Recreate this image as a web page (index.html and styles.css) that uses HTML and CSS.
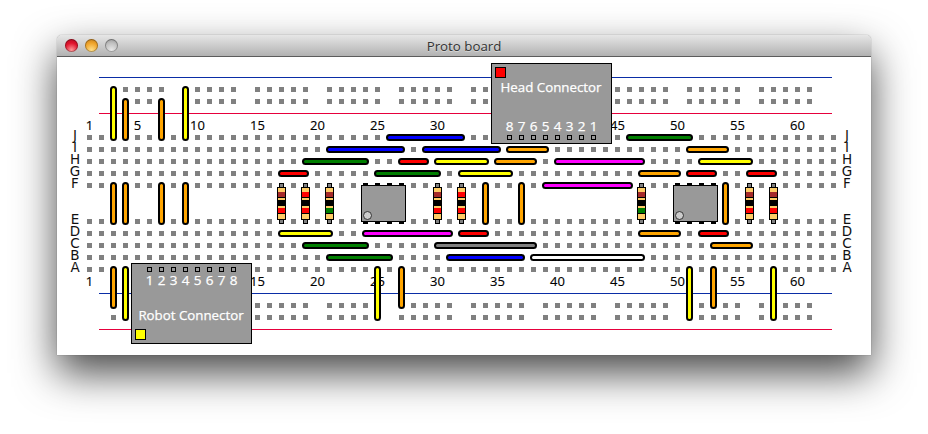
FILE: index.html
```html
<!DOCTYPE html>
<html lang="en">
<head>
  <meta charset="UTF-8" />
  <title>Proto board</title>
  <link rel="stylesheet" href="styles.css">
</head>
<body>

<div class="window">
  <header class="titlebar">
    <div class="lights">
      <span class="light close"></span>
      <span class="light minimize"></span>
      <span class="light zoom"></span>
    </div>
    <span class="title">Proto board</span>
  </header>

  <!-- viewBox uses page coordinates, column n sits at x = 89.5 + 12 * (n - 1) -->
  <svg class="board" viewBox="57 57 814 298" width="814" height="298">
    <defs>
      <pattern id="holes" patternUnits="userSpaceOnUse" x="87" y="135" width="12" height="12">
        <rect class="hole" width="5" height="5"/>
      </pattern>
      <pattern id="railHoles" patternUnits="userSpaceOnUse" x="111" y="87" width="72" height="12">
        <rect class="hole" x="0" width="5" height="5"/>
        <rect class="hole" x="12" width="5" height="5"/>
        <rect class="hole" x="24" width="5" height="5"/>
        <rect class="hole" x="36" width="5" height="5"/>
        <rect class="hole" x="48" width="5" height="5"/>
      </pattern>
      <g id="resistor">
        <rect class="lead" x="279.5" y="183.5" width="4" height="4"/>
        <rect class="lead" x="279.5" y="219.5" width="4" height="4"/>
        <rect class="res-body" x="277.5" y="187.5" width="8" height="32"/>
        <rect class="black" x="278" y="197" width="7" height="1"/>
        <rect class="black" x="278" y="200" width="7" height="6"/>
        <rect class="black" x="278" y="213" width="7" height="1"/>
      </g>
      <g id="chip">
        <rect class="black" x="363" y="183" width="5" height="3"/>
        <rect class="black" x="375" y="183" width="5" height="3"/>
        <rect class="black" x="387" y="183" width="5" height="3"/>
        <rect class="black" x="399" y="183" width="5" height="3"/>
        <rect class="black" x="363" y="221" width="5" height="3"/>
        <rect class="black" x="375" y="221" width="5" height="3"/>
        <rect class="black" x="387" y="221" width="5" height="3"/>
        <rect class="black" x="399" y="221" width="5" height="3"/>
        <rect class="chip-body" x="361.5" y="185.5" width="44" height="36"/>
        <circle class="chip-dot" cx="367.5" cy="215.5" r="4"/>
      </g>
    </defs>

    <!-- power rails -->
    <line class="rail-blue" x1="99" y1="77.5" x2="832" y2="77.5"/>
    <line class="rail-red" x1="99" y1="113.5" x2="832" y2="113.5"/>
    <line class="rail-blue" x1="99" y1="293.5" x2="832" y2="293.5"/>
    <line class="rail-red" x1="99" y1="329.5" x2="832" y2="329.5"/>

    <!-- holes -->
    <rect fill="url(#railHoles)" x="111" y="87" width="701" height="17"/>
    <rect fill="url(#holes)" x="87" y="135" width="749" height="53"/>
    <rect fill="url(#holes)" x="87" y="219" width="749" height="53"/>
    <rect fill="url(#railHoles)" x="111" y="303" width="701" height="17"/>

    <!-- column numbers, the ones under a connector are left out -->
    <g class="num">
      <text x="89.5" y="130">1</text><text x="137.5" y="130">5</text><text x="197.5" y="130">10</text>
      <text x="257.5" y="130">15</text><text x="317.5" y="130">20</text><text x="377.5" y="130">25</text>
      <text x="437.5" y="130">30</text>
      <text x="617.5" y="130">45</text><text x="677.5" y="130">50</text><text x="737.5" y="130">55</text>
      <text x="797.5" y="130">60</text>
      <text x="89.5" y="286">1</text>
      <text x="257.5" y="286">15</text><text x="317.5" y="286">20</text><text x="377.5" y="286">25</text>
      <text x="437.5" y="286">30</text><text x="497.5" y="286">35</text><text x="557.5" y="286">40</text>
      <text x="617.5" y="286">45</text><text x="677.5" y="286">50</text><text x="737.5" y="286">55</text>
      <text x="797.5" y="286">60</text>
    </g>

    <!-- row letters -->
    <g class="letter">
      <text x="75" y="140">J</text><text x="75" y="152">I</text><text x="75" y="164">H</text>
      <text x="75" y="176">G</text><text x="75" y="188">F</text><text x="75" y="224">E</text>
      <text x="75" y="236">D</text><text x="75" y="248">C</text><text x="75" y="260">B</text>
      <text x="75" y="272">A</text>
      <text x="847" y="140">J</text><text x="847" y="152">I</text><text x="847" y="164">H</text>
      <text x="847" y="176">G</text><text x="847" y="188">F</text><text x="847" y="224">E</text>
      <text x="847" y="236">D</text><text x="847" y="248">C</text><text x="847" y="260">B</text>
      <text x="847" y="272">A</text>
    </g>

    <!-- wires -->
    <g class="wires">
      <rect class="blue" x="387" y="135" width="77" height="5"/>
      <rect class="green" x="627" y="135" width="65" height="5"/>

      <rect class="blue" x="327" y="147" width="77" height="5"/>
      <rect class="blue" x="423" y="147" width="77" height="5"/>
      <rect class="orange" x="507" y="147" width="41" height="5"/>
      <rect class="orange" x="687" y="147" width="41" height="5"/>

      <rect class="green" x="303" y="159" width="65" height="5"/>
      <rect class="red" x="399" y="159" width="29" height="5"/>
      <rect class="yellow" x="435" y="159" width="53" height="5"/>
      <rect class="orange" x="495" y="159" width="41" height="5"/>
      <rect class="magenta" x="555" y="159" width="89" height="5"/>
      <rect class="yellow" x="699" y="159" width="53" height="5"/>

      <rect class="red" x="279" y="171" width="29" height="5"/>
      <rect class="green" x="375" y="171" width="65" height="5"/>
      <rect class="yellow" x="459" y="171" width="53" height="5"/>
      <rect class="orange" x="639" y="171" width="41" height="5"/>
      <rect class="red" x="687" y="171" width="29" height="5"/>
      <rect class="red" x="747" y="171" width="29" height="5"/>

      <rect class="magenta" x="543" y="183" width="89" height="5"/>

      <rect class="yellow" x="279" y="231" width="53" height="5"/>
      <rect class="magenta" x="363" y="231" width="89" height="5"/>
      <rect class="red" x="459" y="231" width="29" height="5"/>
      <rect class="orange" x="639" y="231" width="41" height="5"/>
      <rect class="red" x="699" y="231" width="29" height="5"/>

      <rect class="green" x="303" y="243" width="65" height="5"/>
      <rect class="gray" x="435" y="243" width="101" height="5"/>
      <rect class="orange" x="711" y="243" width="41" height="5"/>

      <rect class="green" x="327" y="255" width="65" height="5"/>
      <rect class="blue" x="447" y="255" width="77" height="5"/>
      <rect class="white" x="531" y="255" width="113" height="5"/>

      <rect class="yellow" x="111" y="87" width="5" height="53"/>
      <rect class="orange" x="123" y="99" width="5" height="41"/>
      <rect class="orange" x="159" y="99" width="5" height="41"/>
      <rect class="yellow" x="183" y="87" width="5" height="53"/>

      <rect class="orange" x="111" y="183" width="5" height="41"/>
      <rect class="orange" x="123" y="183" width="5" height="41"/>
      <rect class="orange" x="159" y="183" width="5" height="41"/>
      <rect class="orange" x="183" y="183" width="5" height="41"/>
      <rect class="orange" x="483" y="183" width="5" height="41"/>
      <rect class="orange" x="519" y="183" width="5" height="41"/>
      <rect class="orange" x="723" y="183" width="5" height="41"/>

      <rect class="orange" x="111" y="267" width="5" height="41"/>
      <rect class="yellow" x="123" y="267" width="5" height="53"/>
      <rect class="yellow" x="375" y="267" width="5" height="53"/>
      <rect class="orange" x="399" y="267" width="5" height="41"/>
      <rect class="yellow" x="687" y="267" width="5" height="53"/>
      <rect class="orange" x="711" y="267" width="5" height="41"/>
      <rect class="yellow" x="771" y="267" width="5" height="53"/>
    </g>

    <!-- resistors -->
    <g>
      <use href="#resistor"/>
      <rect class="brown" x="278" y="192" width="7" height="5"/>
      <rect class="red" x="278" y="208" width="7" height="5"/>
    </g>
    <g transform="translate(24 0)">
      <use href="#resistor"/>
      <rect class="red" x="278" y="192" width="7" height="5"/>
      <rect class="red" x="278" y="208" width="7" height="5"/>
    </g>
    <g transform="translate(48 0)">
      <use href="#resistor"/>
      <rect class="brown" x="278" y="192" width="7" height="5"/>
      <rect class="green" x="278" y="208" width="7" height="5"/>
    </g>
    <g transform="translate(156 0)">
      <use href="#resistor"/>
      <rect class="brown" x="278" y="192" width="7" height="5"/>
      <rect class="red" x="278" y="208" width="7" height="5"/>
    </g>
    <g transform="translate(180 0)">
      <use href="#resistor"/>
      <rect class="red" x="278" y="192" width="7" height="5"/>
      <rect class="red" x="278" y="208" width="7" height="5"/>
    </g>
    <g transform="translate(360 0)">
      <use href="#resistor"/>
      <rect class="brown" x="278" y="192" width="7" height="5"/>
      <rect class="green" x="278" y="208" width="7" height="5"/>
    </g>
    <g transform="translate(468 0)">
      <use href="#resistor"/>
      <rect class="brown" x="278" y="192" width="7" height="5"/>
      <rect class="red" x="278" y="208" width="7" height="5"/>
    </g>
    <g transform="translate(492 0)">
      <use href="#resistor"/>
      <rect class="brown" x="278" y="192" width="7" height="5"/>
      <rect class="red" x="278" y="208" width="7" height="5"/>
    </g>

    <!-- chips -->
    <use href="#chip"/>
    <use href="#chip" x="312"/>

    <!-- head connector -->
    <g class="connector">
      <rect class="conn-body" x="491.5" y="63.5" width="120" height="80"/>
      <rect class="conn-flag red" x="495.5" y="67.5" width="10" height="10"/>
      <text class="conn-name" x="551" y="92">Head Connector</text>
      <text x="509.5" y="131">8</text><text x="521.5" y="131">7</text><text x="533.5" y="131">6</text>
      <text x="545.5" y="131">5</text><text x="557.5" y="131">4</text><text x="569.5" y="131">3</text>
      <text x="581.5" y="131">2</text><text x="593.5" y="131">1</text>
      <rect class="conn-pin" x="507.5" y="135.5" width="4" height="4"/>
      <rect class="conn-pin" x="519.5" y="135.5" width="4" height="4"/>
      <rect class="conn-pin" x="531.5" y="135.5" width="4" height="4"/>
      <rect class="conn-pin" x="543.5" y="135.5" width="4" height="4"/>
      <rect class="conn-pin" x="555.5" y="135.5" width="4" height="4"/>
      <rect class="conn-pin" x="567.5" y="135.5" width="4" height="4"/>
      <rect class="conn-pin" x="579.5" y="135.5" width="4" height="4"/>
      <rect class="conn-pin" x="591.5" y="135.5" width="4" height="4"/>
    </g>

    <!-- robot connector -->
    <g class="connector">
      <rect class="conn-body" x="131.5" y="263.5" width="120" height="80"/>
      <rect class="conn-flag yellow" x="135.5" y="329.5" width="10" height="10"/>
      <text class="conn-name" x="191" y="320">Robot Connector</text>
      <text x="149.5" y="285">1</text><text x="161.5" y="285">2</text><text x="173.5" y="285">3</text>
      <text x="185.5" y="285">4</text><text x="197.5" y="285">5</text><text x="209.5" y="285">6</text>
      <text x="221.5" y="285">7</text><text x="233.5" y="285">8</text>
      <rect class="conn-pin" x="147.5" y="267.5" width="4" height="4"/>
      <rect class="conn-pin" x="159.5" y="267.5" width="4" height="4"/>
      <rect class="conn-pin" x="171.5" y="267.5" width="4" height="4"/>
      <rect class="conn-pin" x="183.5" y="267.5" width="4" height="4"/>
      <rect class="conn-pin" x="195.5" y="267.5" width="4" height="4"/>
      <rect class="conn-pin" x="207.5" y="267.5" width="4" height="4"/>
      <rect class="conn-pin" x="219.5" y="267.5" width="4" height="4"/>
      <rect class="conn-pin" x="231.5" y="267.5" width="4" height="4"/>
    </g>
  </svg>
</div>

</body>
</html>
```

FILE: styles.css
```css
html, body {
  height: 100%;
}
body {
  margin: 0;
  background: #fff;
  font-family: "Open Sans", sans-serif;
  overflow: hidden;
}
.window {
  width: 814px;
  margin: 35px 0 0 57px;
  border-radius: 5px 5px 0 0;
  box-shadow: 0 18px 42px rgba(0,0,0,0.72), 0 0 1px rgba(0,0,0,0.6);
}
.titlebar {
  height: 21px;
  display: grid;
  grid-template-columns: 1fr auto 1fr;
  align-items: center;
  background: linear-gradient(#e6e6e6, #b2b2b2);
  border-bottom: 1px solid #5c5c5c;
  border-radius: 5px 5px 0 0;
}
.lights {
  display: flex;
  gap: 7px;
  padding-left: 8px;
}
.light {
  width: 13px;
  height: 13px;
  border-radius: 50%;
  box-shadow: inset 0 0 0 1px rgba(0,0,0,0.3);
}
.close {
  background: radial-gradient(circle at 50% 85%, #ff9a9a, #e0122b 55%, #a80c20);
}
.minimize {
  background: radial-gradient(circle at 50% 85%, #ffe08a, #f0a42a 55%, #b8761a);
}
.zoom {
  background: radial-gradient(circle at 50% 85%, #e8e8e8, #c0c0c0 55%, #8e8e8e);
}
.title {
  font-size: 13.3px;
  color: #333;
  text-shadow: 0 1px 0 rgba(255,255,255,0.4);
}
.board {
  display: block;
  background: #fff;
}

.hole {
  fill: #808080;
}
.rail-blue {
  stroke: #0a2da6;
}
.rail-red {
  stroke: #e6003c;
}
.num text,
.letter text,
.connector text {
  text-anchor: middle;
}
.num text {
  font-size: 13px;
  fill: #000;
  stroke: #000;
  stroke-width: 0.15px;
}
.letter text {
  font-family: "DejaVu Sans", sans-serif;
  font-size: 13.5px;
  fill: #111;
}
.connector text {
  font-size: 13.5px;
  fill: #fff;
  stroke: #fff;
  stroke-width: 0.25px;
}
.connector .conn-name {
  font-size: 13.3px;
}

.wires rect {
  stroke: #000;
  stroke-width: 2;
  rx: 2.5px;
  ry: 2.5px;
}
.blue { fill: #0000ff; }
.green { fill: #007f00; }
.orange { fill: #ffa500; }
.red { fill: #ff0000; }
.yellow { fill: #ffff00; }
.magenta { fill: #ff00ff; }
.gray { fill: #808080; }
.white { fill: #ffffff; }
.brown { fill: #a52a2a; }
.black { fill: #000; }

.lead {
  fill: #808080;
  stroke: #000;
}
.res-body {
  fill: #ffcc66;
  stroke: #000;
}
.chip-body {
  fill: #999;
  stroke: #000;
}
.chip-dot {
  fill: #ccc;
  stroke: #333;
}
.conn-body {
  fill: #999;
  stroke: #000;
}
.conn-flag {
  stroke: #000;
}
.conn-pin {
  fill: none;
  stroke: #000;
}
```
